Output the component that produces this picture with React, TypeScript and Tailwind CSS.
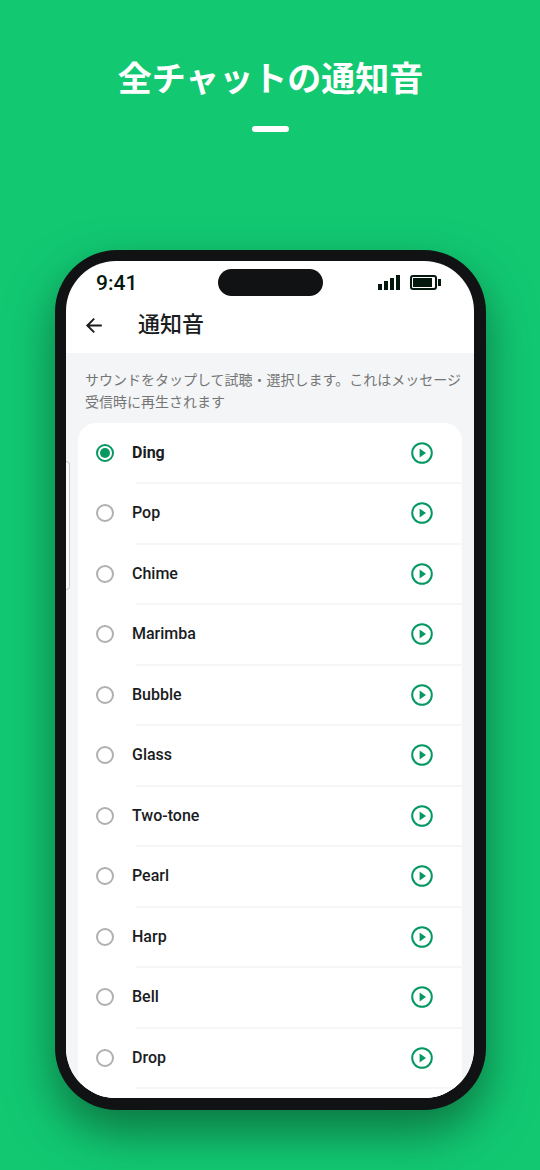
import { useState } from "react"

const sounds = ["Ding", "Pop", "Chime", "Marimba", "Bubble", "Glass", "Two-tone", "Pearl", "Harp", "Bell", "Drop"]

const StatusBar = () => {
    return (
        <div className="flex h-[43px] items-center justify-between pl-[30px] pr-[33px] text-[#04180d]">
            <time className="w-[77px] text-[21px] leading-6 font-medium">9:41</time>
            {/* Dynamic island */}
            <div className="h-[27px] w-[105px] rounded-full bg-[#101214]" />
            <div className="flex w-[73px] items-center justify-end gap-[9px]">
                <svg width="24" height="15" viewBox="0 0 24 15" fill="currentColor" aria-hidden="true">
                    <rect x="1" y="9" width="4" height="6" />
                    <rect x="7" y="6" width="4" height="9" />
                    <rect x="13" y="3" width="4" height="12" />
                    <rect x="19" y="0" width="4" height="15" />
                </svg>
                <svg width="31" height="15" viewBox="0 0 31 15" fill="currentColor" aria-hidden="true">
                    <rect x="1" y="1" width="25" height="13" rx="2" fill="none" stroke="currentColor" strokeWidth="2" />
                    <rect x="3" y="3" width="19" height="9" />
                    <rect x="28" y="4" width="3" height="7" />
                </svg>
            </div>
        </div>
    )
}

const PlayIcon = () => {
    return (
        <svg width="22" height="22" viewBox="0 0 22 22" aria-hidden="true">
            <circle cx="11" cy="11" r="9.8" fill="none" stroke="currentColor" strokeWidth="2" />
            <path d="M8.6 6.6 15 11l-6.4 4.4z" fill="currentColor" />
        </svg>
    )
}

export default function App() {
    const [selected, setSelected] = useState("Ding")

    return (
        <main className="min-h-screen bg-[#12c972] pt-[54px] pr-[54px] pb-[60px] pl-[55px] font-['Roboto','Noto_Sans_CJK_JP',sans-serif]">
            <header className="flex h-[196px] flex-col items-center gap-[22px]">
                <h1 className="text-[34px] leading-[50px] font-bold text-white">全チャットの通知音</h1>
                <div className="h-1.5 w-[37px] rounded-full bg-white" />
            </header>

            {/* Phone */}
            <section className="rounded-[62px] bg-[#101214] pt-[11px] pr-3 pb-3 pl-[11px] shadow-[0_22px_48px_rgba(10,50,30,0.55)]">
                <div className="relative overflow-hidden rounded-[50px] bg-white">
                    <StatusBar />
                    <div className="flex h-[49px] items-center gap-[33px] pl-[17px] pb-2">
                        <button type="button" aria-label="戻る" className="text-[#1a1c1e]">
                            <svg width="22" height="22" viewBox="0 0 22 22" fill="none" stroke="currentColor" strokeWidth="1.9" aria-hidden="true">
                                <path d="M18.8 11.5H4.5M11.2 4.6l-6.9 6.9 6.9 6.9" />
                            </svg>
                        </button>
                        <h2 className="text-[22px] leading-8 font-medium text-[#1a1c1e]">通知音</h2>
                    </div>

                    <div className="bg-[#f3f5f7] px-3 pt-4">
                        <p className="-mr-3 pb-2.5 pl-[7px] text-[14px] leading-[22px] text-[#757575]">
                            サウンドをタップして試聴・選択します。これはメッセージ受信時に再生されます
                        </p>
                        <ul className="rounded-t-[18px] bg-white pb-[10px]">
                            {sounds.map((sound) => (
                                <li key={sound} className="relative flex h-[60px] items-center pr-[29px] pl-[18px] even:h-[61px] even:pb-px">
                                    <label className="flex flex-1 items-center gap-[18px] text-[16px] leading-6 font-medium text-[#1a1c1e] has-checked:font-bold">
                                        <input
                                            type="radio"
                                            name="sound"
                                            checked={selected === sound}
                                            onChange={() => setSelected(sound)}
                                            className="size-[18px] appearance-none rounded-full border-2 border-[#b0b0b0] checked:border-[#059862] checked:bg-[#059862] checked:bg-clip-content checked:p-[2px]"
                                        />
                                        {sound}
                                    </label>
                                    <button type="button" aria-label={`${sound}を再生`} className="text-[#059862]">
                                        <PlayIcon />
                                    </button>
                                    <div className="absolute right-0 -bottom-px left-[58px] h-0.5 bg-[#f6f6f6]" />
                                </li>
                            ))}
                        </ul>
                    </div>

                    {/* Edge panel handle */}
                    <div className="absolute top-[200px] left-0 h-[129px] w-1 rounded-r-[4px] border border-l-0 border-[#c9c9cb] bg-[#fafafa]" />
                </div>
            </section>
        </main>
    )
}
